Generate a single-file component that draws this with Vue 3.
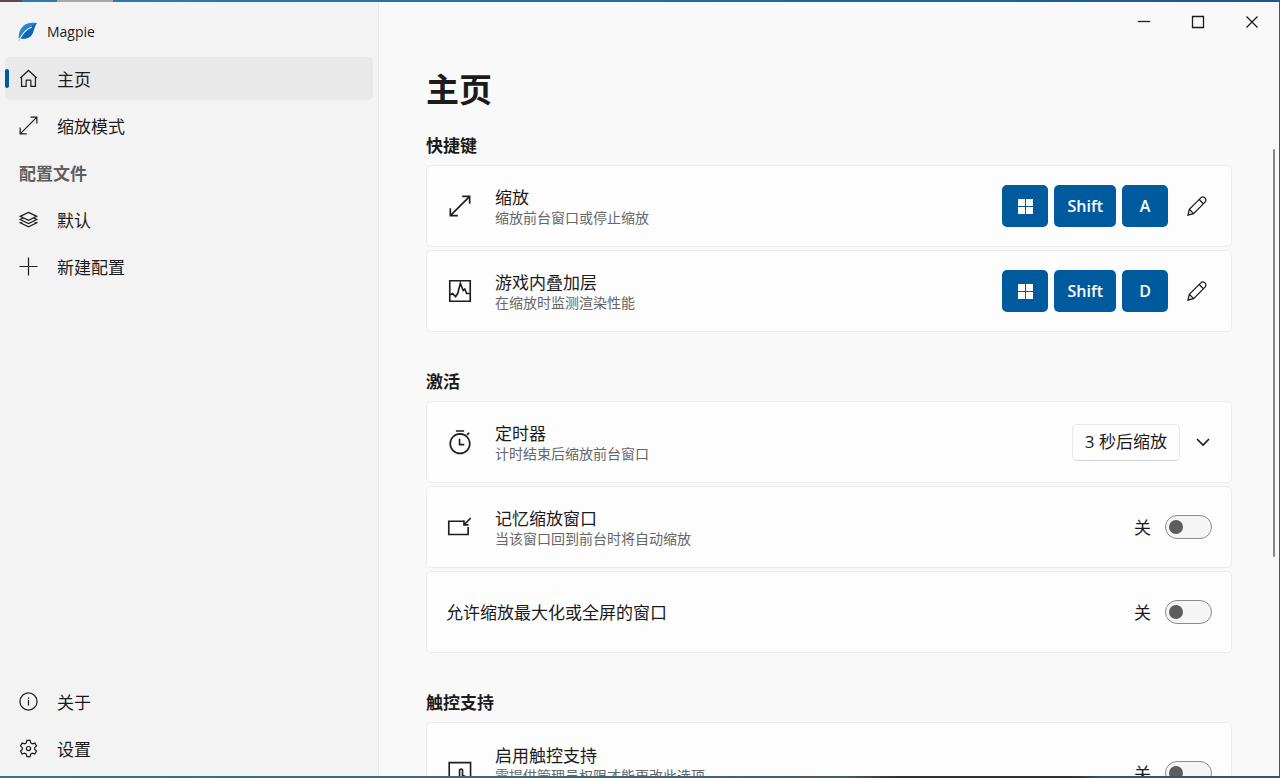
<script setup>
import { ref } from 'vue'

const topNav = [
  { icon: 'home', label: '主页', active: true },
  { icon: 'scale', label: '缩放模式' },
  { header: true, label: '配置文件' },
  { icon: 'layers', label: '默认' },
  { icon: 'plus', label: '新建配置' },
]
const bottomNav = [
  { icon: 'info', label: '关于' },
  { icon: 'gear', label: '设置' },
]
const groups = ref([
  {
    title: '快捷键',
    cards: [
      { id: 'scale', icon: 'scale', title: '缩放', desc: '缩放前台窗口或停止缩放', type: 'keys', key: 'A' },
      { id: 'overlay', icon: 'monitor', title: '游戏内叠加层', desc: '在缩放时监测渲染性能', type: 'keys', key: 'D' },
    ],
  },
  {
    title: '激活',
    cards: [
      { id: 'timer', icon: 'timer', title: '定时器', desc: '计时结束后缩放前台窗口', type: 'timer' },
      { id: 'remember', icon: 'restore', title: '记忆缩放窗口', desc: '当该窗口回到前台时将自动缩放', type: 'toggle', on: false },
      { id: 'maximized', title: '允许缩放最大化或全屏的窗口', type: 'toggle', on: false },
    ],
  },
  {
    title: '触控支持',
    cards: [
      { id: 'touch', icon: 'touch', title: '启用触控支持', desc: '需提供管理员权限才能更改此选项', type: 'toggle', on: false, tall: true },
    ],
  },
])

const icons = {
  home: 'M1.4 9.400 10 1.500l8.600 7.900M2.700 8.300v9.900h4.800v-5.700q0-.8.8-.8h3.400q.8 0 .8.8v5.700h4.800V8.300',
  scale: 'M1.2 18.800 18.800 1.200M12 1.200h6.800V8M1.200 12v6.800H8',
  layers: 'M10 2.500 18.700 6.700 10 10.900 1.300 6.700ZM4.200 8.600 1.300 10 10 14.200l8.700-4.200-2.900-1.400M4.200 12l-2.900 1.400L10 17.600l8.700-4.200-2.900-1.400',
  plus: 'M10 .5v19M.5 10h19',
  info: 'M10 1a9 9 0 1 0 0 18 9 9 0 0 0 0-18ZM10 8.400v5.800M10 5.700v1.400',
  gear: 'M8.300 1.400h3.400l.6 2.600 1.800 1.100 2.600-.8 1.700 3-1.900 1.800v1.900l1.900 1.800-1.700 3-2.600-.8-1.800 1-.6 2.600H8.300L7.700 16l-1.800-1-2.600.8-1.700-3 1.900-1.800V9.100L1.600 7.300l1.700-3 2.600.8L7.700 4ZM10 7.900a2.200 2.200 0 1 0 0 4.400 2.200 2.200 0 0 0 0-4.400Z',
  monitor: 'M.7.7h18.600v18.600H.7ZM.7 13.600 3.300 12.200l2.700 2.900 2-3L10.300 3l2.600 6.500 1.500-1.300L16 12.300h3.300',
  timer: 'M10 2.600a8.900 8.900 0 1 0 0 17.800 8.900 8.900 0 0 0 0-17.800ZM6.300 0h7.400M16.300 3.600l2-1.900M9.600 7v5.400h4.300',
  restore: 'M13 4.800H-.2v12h17.600V10M19.800 1.800l-6 6M13.600 3.800v4.200h4.200',
  touch: 'M4 19.500H.2V.5h19.400v19H17M7 19.500V15l2.400-1.400M9.600 16V7.200q1.400-1.600 2.700 0v5l3.200 1.200q1.500.6 1.500 2.200v4',
}
</script>

<template>
  <div class="desktop">
    <div class="window">
      <aside class="sidebar">
        <div class="brand">
          <svg class="logo" viewBox="0 0 20 20" aria-hidden="true">
            <path d="M18.800 1.100C13.500.4 8.500 1 5 4.200 1.800 7.200.7 11.500.6 16l2 .6c4.200.5 8.400-.1 10.700-3 2.600-3.400 2.700-8.800 5.500-12.500Z" fill="#2088d0" />
            <path d="M18.800 1.100C12.500 4 6.500 9 2.600 16.600c4.200.5 8.400-.1 10.700-3 2.600-3.400 2.700-8.800 5.500-12.500Z" fill="#0c66b4" />
            <path d="M13.800 5C9 7 4.800 11 2 16.600" fill="none" stroke="#eef6fc" stroke-width="1.200" />
            <path d="M1.800 16.300.9 18.900" stroke="#d5c6cf" stroke-width="1.300" />
          </svg>
          <span>Magpie</span>
        </div>
        <nav class="nav">
          <template v-for="item in topNav" :key="item.label">
            <h2 v-if="item.header" class="nav-header">{{ item.label }}</h2>
            <a v-else href="#" class="nav-item" :class="{ active: item.active }">
              <svg class="icon small" viewBox="0 0 20 20" aria-hidden="true"><path :d="icons[item.icon]" /></svg>
              <span>{{ item.label }}</span>
            </a>
          </template>
        </nav>
        <nav class="nav bottom">
          <a v-for="item in bottomNav" :key="item.label" href="#" class="nav-item">
            <svg class="icon small" viewBox="0 0 20 20" aria-hidden="true"><path :d="icons[item.icon]" /></svg>
            <span>{{ item.label }}</span>
          </a>
        </nav>
      </aside>

      <main class="main">
        <div class="titlebar">
          <button type="button" aria-label="最小化"><svg viewBox="0 0 14 14"><path d="M1 6.500h12" /></svg></button>
          <button type="button" aria-label="最大化"><svg viewBox="0 0 14 14"><path d="M1.500 1.500h11v11h-11Z" /></svg></button>
          <button type="button" aria-label="关闭"><svg viewBox="0 0 14 14"><path d="m1.500 1.500 11 11M12.500 1.500l-11 11" /></svg></button>
        </div>
        <div class="content">
          <h1>主页</h1>
          <section v-for="group in groups" :key="group.title" class="group">
            <h2>{{ group.title }}</h2>
            <div class="cards">
              <div v-for="card in group.cards" :key="card.id" class="card" :class="{ tall: card.tall }">
                <div v-if="card.icon" class="card-icon">
                  <svg class="icon" viewBox="0 0 20 20" aria-hidden="true"><path :d="icons[card.icon]" /></svg>
                </div>
                <div class="card-text">
                  <label v-if="card.type === 'toggle'" :for="card.id" class="card-title">{{ card.title }}</label>
                  <div v-else class="card-title">{{ card.title }}</div>
                  <div v-if="card.desc" class="card-desc">{{ card.desc }}</div>
                </div>

                <div v-if="card.type === 'keys'" class="actions">
                  <div class="keys">
                    <kbd aria-label="Win">
                      <svg class="win" viewBox="0 0 15 15" aria-hidden="true"><path d="M0 0h7v7H0ZM8 0h7v7H8ZM0 8h7v7H0ZM8 8h7v7H8Z" /></svg>
                    </kbd>
                    <kbd>Shift</kbd>
                    <kbd>{{ card.key }}</kbd>
                  </div>
                  <button type="button" class="edit" aria-label="编辑快捷键">
                    <svg class="icon small" viewBox="0 0 20 20" aria-hidden="true">
                      <path d="M1 19l1.300-5.700L13.800 1.900a2.900 2.900 0 0 1 4.200 4.200L6.600 17.600ZM12.200 3.500l4.200 4.200M2.300 13.300l4.300 4.300" />
                    </svg>
                  </button>
                </div>

                <div v-else-if="card.type === 'timer'" class="actions">
                  <button type="button" class="push">3 秒后缩放</button>
                  <button type="button" class="expand" aria-label="展开">
                    <svg viewBox="0 0 18 18" aria-hidden="true"><path d="m3 6 6 6 6-6" /></svg>
                  </button>
                </div>

                <div v-else class="actions">
                  <span class="state">{{ card.on ? '开' : '关' }}</span>
                  <input :id="card.id" v-model="card.on" type="checkbox" class="switch" role="switch" />
                </div>
              </div>
            </div>
          </section>
        </div>
        <div class="scroll-thumb"></div>
      </main>
    </div>
  </div>
</template>

<style>
body {
  margin: 0;
  overflow: hidden;
}
</style>

<style scoped>
* {
  box-sizing: border-box;
}
.desktop {
  height: 100vh;
  padding: 2px 1px 2px 0;
  background:
    linear-gradient(90deg, #5a4a50 0 22px, transparent 22px 57px, #a9a9a4 57px 113px, transparent 113px) top / 100% 2px no-repeat,
    linear-gradient(90deg, #3178b2, #2a6ca6 40%, #1c5890) top / 100% 2px no-repeat,
    linear-gradient(90deg, #3d7285, #3f6574 50%, #4b5c60 66%, #2f3331 70%, #2f3331 84%, #38566a 86%) bottom / 100% 2px no-repeat,
    #3f5563;
  font-family: "Open Sans", "Noto Sans CJK SC", sans-serif;
  font-size: 17px;
  line-height: 22px;
  color: #1b1b1b;
}
.window {
  display: flex;
  height: 100%;
  background: #f9f9f9;
}
button {
  padding: 0;
  border: 0;
  background: transparent;
  font: inherit;
  color: inherit;
}
h1,
h2 {
  margin: 0;
}
.icon {
  display: block;
  flex: none;
  width: 22px;
  height: 22px;
  overflow: visible;
  fill: none;
  stroke: #1f1f1f;
  stroke-width: 1.5;
}
.icon.small {
  width: 20px;
  height: 20px;
  stroke-width: 1.3;
}

.sidebar {
  display: flex;
  flex: none;
  flex-direction: column;
  width: 379px;
  padding: 0 5px 6px;
  border-right: 1px solid #e7e7e7;
  background: #f3f3f3;
}
.brand {
  display: flex;
  align-items: center;
  gap: 9px;
  height: 55px;
  padding: 4px 13px 0;
  font-size: 14px;
}
.logo {
  width: 20px;
  height: 20px;
}
.nav {
  display: flex;
  flex-direction: column;
  gap: 4px;
}
.bottom {
  margin-top: auto;
}
.nav-item {
  position: relative;
  display: flex;
  align-items: center;
  gap: 19px;
  height: 43px;
  padding: 0 14px;
  border-radius: 5px;
  color: inherit;
  text-decoration: none;
}
.nav-item.active {
  background: #e9e9e9;
}
.nav-item.active::before {
  content: "";
  position: absolute;
  left: 0;
  top: 12px;
  width: 4px;
  height: 19px;
  border-radius: 2px;
  background: #005a9e;
}
.nav-item .icon {
  width: 19px;
  height: 19px;
}
.nav-item span,
.state {
  padding-top: 2px;
}
.nav-header {
  padding: 2px 14px 0;
  font-size: 17px;
  font-weight: 700;
  line-height: 41px;
  color: #5f5f5f;
}

.main {
  position: relative;
  display: flex;
  flex: 1;
  flex-direction: column;
  min-width: 0;
  overflow: hidden;
}
.titlebar {
  display: flex;
  flex: none;
  justify-content: flex-end;
  height: 40px;
}
.titlebar button {
  display: grid;
  place-items: center;
  width: 54px;
}
.titlebar svg {
  width: 14px;
  height: 14px;
  fill: none;
  stroke: #1b1b1b;
  stroke-width: 1.3;
}
.content {
  flex: 1;
  min-height: 0;
  padding: 26px 47px 0;
  overflow: hidden;
}
h1 {
  margin-bottom: 23px;
  font-size: 33px;
  font-weight: 700;
  line-height: 44px;
}
.group + .group {
  margin-top: 39px;
}
.group h2 {
  margin-bottom: 8px;
  font-size: 17px;
  font-weight: 700;
  line-height: 22px;
}
.cards {
  display: flex;
  flex-direction: column;
  gap: 3px;
}
.card {
  display: flex;
  align-items: center;
  min-height: 82px;
  padding: 0 19px;
  border: 1px solid #ececec;
  border-radius: 5px;
  background: #fdfdfd;
}
.card-icon {
  display: grid;
  place-items: center;
  width: 28px;
  margin-right: 21px;
}
.card-text {
  flex: 1;
  padding-top: 2px;
}
.card.tall {
  min-height: 102px;
}
.card.tall .card-text {
  min-height: 60px;
}
.card-title {
  display: block;
}
.card-desc {
  font-size: 14px;
  line-height: 18px;
  color: #666;
}
.actions {
  display: flex;
  align-items: center;
  gap: 14px;
}
.keys {
  display: flex;
  gap: 6px;
}
kbd {
  display: grid;
  place-items: center;
  min-width: 46px;
  height: 42px;
  padding: 0 13px;
  border-radius: 5px;
  background: #005a9e;
  color: #fff;
  font-family: inherit;
  font-size: 16px;
  font-weight: 600;
}
.win {
  width: 15px;
  height: 15px;
  fill: #fff;
}
.edit {
  display: grid;
  place-items: center;
  width: 30px;
  height: 42px;
}
.push {
  height: 37px;
  padding: 0 12px;
  border: 1px solid #e8e8e8;
  border-bottom-color: #d4d4d4;
  border-radius: 5px;
  background: #fefefe;
}
.expand {
  display: grid;
  place-items: center;
  width: 18px;
  height: 37px;
}
.expand svg {
  width: 18px;
  height: 18px;
  fill: none;
  stroke: #1b1b1b;
  stroke-width: 1.6;
}
.switch {
  appearance: none;
  display: flex;
  align-items: center;
  width: 47px;
  height: 24px;
  margin: 0;
  padding: 0 3px;
  border: 1px solid #8c8c8c;
  border-radius: 12px;
  background: #f5f5f5;
}
.switch::before {
  content: "";
  width: 14px;
  height: 14px;
  border-radius: 50%;
  background: #5d5d5d;
}
.switch:checked {
  justify-content: flex-end;
  border-color: #005a9e;
  background: #005a9e;
}
.switch:checked::before {
  background: #fff;
}
.scroll-thumb {
  position: absolute;
  top: 19%;
  right: 4px;
  width: 2px;
  height: 408px;
  border-radius: 1px;
  background: #868686;
}
</style>
